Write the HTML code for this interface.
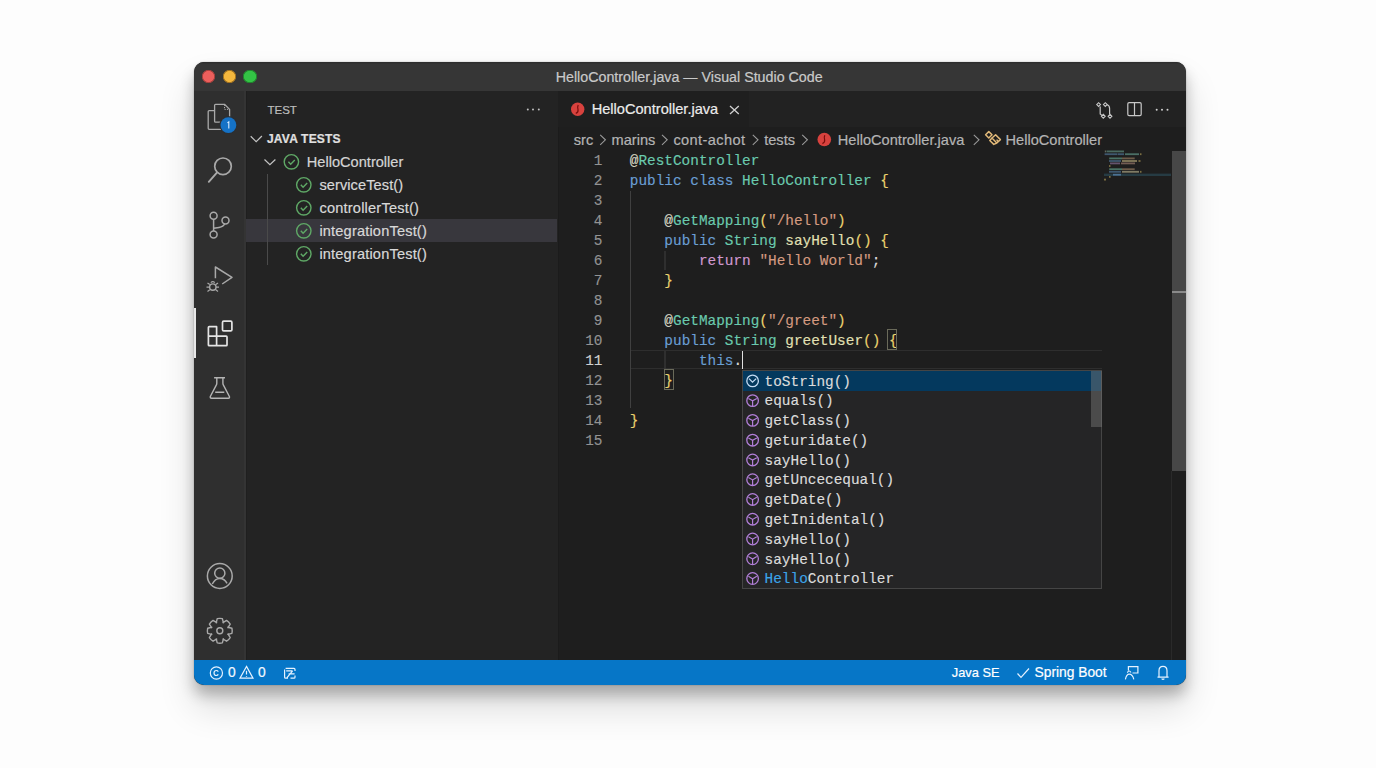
<!DOCTYPE html>
<html><head><meta charset="utf-8">
<style>
html,body{margin:0;padding:0;}
body{width:1376px;height:768px;position:relative;overflow:hidden;background:#fdfdfd;font-family:"Liberation Sans", sans-serif;}
.r{position:absolute;}
.t{position:absolute;white-space:pre;line-height:20px;font-family:"Liberation Sans", sans-serif;-webkit-text-stroke:0.2px currentColor;}
.m{position:absolute;white-space:pre;line-height:20px;font-family:"Liberation Mono", monospace;font-size:14.4px;-webkit-text-stroke:0.15px currentColor;}
.ln{left:560px;width:42.5px;text-align:right;}
#win{position:absolute;border-radius:10px;background:#1e1e1e;box-shadow:0 10px 14px rgba(0,0,0,0.24),0 22px 36px rgba(0,0,0,0.14),0 0 1.5px rgba(0,0,0,0.35);}
svg{position:absolute;left:0;top:0;}
</style></head><body>
<div id="win" style="left:194px;top:62px;width:992px;height:623px;"></div>
<div class="r" style="left:194px;top:62px;width:992px;height:29px;background:linear-gradient(#2c2c2c 0px,#363636 2.5px,#363636 100%);border-radius:10px 10px 0 0"></div>
<div class="r" style="left:201.80px;top:69.70px;width:13.6px;height:13.6px;border-radius:50%;background:#ec5f5c;box-shadow:inset 0 0 0 0.8px #9a3a36;"></div>
<div class="r" style="left:222.70px;top:69.70px;width:13.6px;height:13.6px;border-radius:50%;background:#f4b73d;box-shadow:inset 0 0 0 0.8px #94661a;"></div>
<div class="r" style="left:243.10px;top:69.70px;width:13.6px;height:13.6px;border-radius:50%;background:#33c345;box-shadow:inset 0 0 0 0.8px #1d7a28;"></div>
<div class="t" style="left:555.7px;top:66.66px;font-size:14.27px;color:#c9c9c9;font-weight:400;">HelloController.java — Visual Studio Code</div>
<div class="r" style="left:194px;top:91px;width:52px;height:569px;background:#2f2f2f"></div>
<div class="r" style="left:244px;top:91px;width:2px;height:569px;background:#343434"></div>
<div class="r" style="left:194px;top:308px;width:2px;height:50px;background:#e8e8e8"></div>
<div class="r" style="left:246px;top:91px;width:312px;height:569px;background:#232323"></div>
<div class="r" style="left:246px;top:91px;width:1px;height:569px;background:#1f1f1f"></div>
<div class="r" style="left:558px;top:91px;width:1px;height:569px;background:#1b1b1b"></div>
<div class="r" style="left:246px;top:219px;width:311px;height:23px;background:#38373d"></div>
<div class="t" style="left:267.5px;top:100.22px;font-size:11.5px;color:#bdbdbd;font-weight:400;">TEST</div>
<div class="t" style="left:267px;top:129.14px;font-size:12px;color:#e0e0e0;font-weight:700;letter-spacing:0.2px;">JAVA TESTS</div>
<div class="t" style="left:306.8px;top:151.94px;font-size:14.6px;color:#d4d4d4;font-weight:400;">HelloController</div>
<div class="t" style="left:319.4px;top:174.94px;font-size:14.6px;color:#d8d8d8;font-weight:400;letter-spacing:0.08px;">serviceTest()</div>
<div class="t" style="left:319.4px;top:197.94px;font-size:14.6px;color:#d8d8d8;font-weight:400;letter-spacing:0.2px;">controllerTest()</div>
<div class="t" style="left:319.4px;top:220.94px;font-size:14.6px;color:#d8d8d8;font-weight:400;letter-spacing:0.17px;">integrationTest()</div>
<div class="t" style="left:319.4px;top:243.94px;font-size:14.6px;color:#d8d8d8;font-weight:400;letter-spacing:0.17px;">integrationTest()</div>
<div class="r" style="left:267px;top:174px;width:1px;height:91px;background:#4a4a4a"></div>
<div class="r" style="left:558px;top:91px;width:628px;height:36px;background:#222222"></div>
<div class="r" style="left:558px;top:91px;width:191px;height:36px;background:#1f1f1f"></div>
<div class="t" style="left:591.7px;top:99.24px;font-size:14.6px;color:#ececec;font-weight:400;">HelloController.java</div>
<div class="r" style="left:559px;top:127px;width:627px;height:533px;background:#1e1e1e"></div>
<div class="t" style="left:573.8px;top:129.54px;font-size:14.6px;color:#b4b4b4;font-weight:400;">src</div>
<div class="t" style="left:611.6px;top:129.54px;font-size:14.6px;color:#b4b4b4;font-weight:400;">marins</div>
<div class="t" style="left:673.4px;top:129.54px;font-size:14.6px;color:#b4b4b4;font-weight:400;letter-spacing:0.4px;">cont-achot</div>
<div class="t" style="left:764.2px;top:129.54px;font-size:14.6px;color:#b4b4b4;font-weight:400;">tests</div>
<div class="t" style="left:837.8px;top:129.54px;font-size:14.6px;color:#b4b4b4;font-weight:400;">HelloController.java</div>
<div class="t" style="left:1005.5px;top:129.54px;font-size:14.6px;color:#b4b4b4;font-weight:400;">HelloController</div>
<div class="m ln" style="top:151.16px;color:#939393">1</div>
<div class="m ln" style="top:171.16px;color:#939393">2</div>
<div class="m ln" style="top:191.16px;color:#939393">3</div>
<div class="m ln" style="top:211.16px;color:#939393">4</div>
<div class="m ln" style="top:231.16px;color:#939393">5</div>
<div class="m ln" style="top:251.16px;color:#939393">6</div>
<div class="m ln" style="top:271.16px;color:#939393">7</div>
<div class="m ln" style="top:291.16px;color:#939393">8</div>
<div class="m ln" style="top:311.16px;color:#939393">9</div>
<div class="m ln" style="top:331.16px;color:#939393">10</div>
<div class="m ln" style="top:351.16px;color:#d0d0d0">11</div>
<div class="m ln" style="top:371.16px;color:#939393">12</div>
<div class="m ln" style="top:391.16px;color:#939393">13</div>
<div class="m ln" style="top:411.16px;color:#939393">14</div>
<div class="m ln" style="top:431.16px;color:#939393">15</div>
<div class="r" style="left:631px;top:350px;width:471px;height:19px;border-top:1px solid #2e2e2e;border-bottom:1px solid #2e2e2e;box-sizing:border-box"></div>
<div class="m" style="left:629.8px;top:151.16px;font-size:14.4px;"><span style="color:#d8d8c4">@</span><span style="color:#6acaae">RestController</span></div>
<div class="m" style="left:629.8px;top:171.16px;font-size:14.4px;"><span style="color:#6a9fd4">public</span> <span style="color:#6a9fd4">class</span> <span style="color:#6acaae">HelloController</span> <span style="color:#ebd36e">{</span></div>
<div class="m" style="left:664.3599999999999px;top:211.16px;font-size:14.4px;"><span style="color:#d8d8c4">@</span><span style="color:#6acaae">GetMapping</span><span style="color:#ebd36e">(</span><span style="color:#d49a80">"/hello"</span><span style="color:#ebd36e">)</span></div>
<div class="m" style="left:664.3599999999999px;top:231.16px;font-size:14.4px;"><span style="color:#6a9fd4">public</span> <span style="color:#6acaae">String</span> <span style="color:#e2e0b4">sayHello</span><span style="color:#ebd36e">()</span> <span style="color:#ebd36e">{</span></div>
<div class="m" style="left:698.92px;top:251.16px;font-size:14.4px;"><span style="color:#d098d0">return</span> <span style="color:#d49a80">"Hello World"</span><span style="color:#dcdcdc">;</span></div>
<div class="m" style="left:664.3599999999999px;top:271.16px;font-size:14.4px;"><span style="color:#ebd36e">}</span></div>
<div class="m" style="left:664.3599999999999px;top:311.16px;font-size:14.4px;"><span style="color:#d8d8c4">@</span><span style="color:#6acaae">GetMapping</span><span style="color:#ebd36e">(</span><span style="color:#d49a80">"/greet"</span><span style="color:#ebd36e">)</span></div>
<div class="m" style="left:664.3599999999999px;top:331.16px;font-size:14.4px;"><span style="color:#6a9fd4">public</span> <span style="color:#6acaae">String</span> <span style="color:#e2e0b4">greetUser</span><span style="color:#ebd36e">()</span> <span style="color:#ebd36e">{</span></div>
<div class="m" style="left:698.92px;top:351.16px;font-size:14.4px;"><span style="color:#6a9fd4">this</span><span style="color:#dcdcdc">.</span></div>
<div class="m" style="left:664.3599999999999px;top:371.16px;font-size:14.4px;"><span style="color:#ebd36e">}</span></div>
<div class="m" style="left:629.8px;top:411.16px;font-size:14.4px;"><span style="color:#ebd36e">}</span></div>
<div class="r" style="left:741.5px;top:351px;width:1.5px;height:18px;background:#e0e0e0"></div>
<div class="r" style="left:742px;top:370px;width:360px;height:219px;background:#252526;border:1px solid #454545;box-sizing:border-box"></div>
<div class="r" style="left:743px;top:371px;width:358px;height:20px;background:#04395e"></div>
<div class="r" style="left:1091px;top:371px;width:11px;height:56px;background:rgba(121,121,121,0.45)"></div>
<div class="m" style="left:764.6px;top:371.66px;font-size:14.4px;"><span style="color:#dcdcdc">toString()</span></div>
<div class="m" style="left:764.6px;top:391.42px;font-size:14.4px;"><span style="color:#dcdcdc">equals()</span></div>
<div class="m" style="left:764.6px;top:411.18px;font-size:14.4px;"><span style="color:#dcdcdc">getClass()</span></div>
<div class="m" style="left:764.6px;top:430.94px;font-size:14.4px;"><span style="color:#dcdcdc">geturidate()</span></div>
<div class="m" style="left:764.6px;top:450.70px;font-size:14.4px;"><span style="color:#dcdcdc">sayHello()</span></div>
<div class="m" style="left:764.6px;top:470.46px;font-size:14.4px;"><span style="color:#dcdcdc">getUncecequal()</span></div>
<div class="m" style="left:764.6px;top:490.22px;font-size:14.4px;"><span style="color:#dcdcdc">getDate()</span></div>
<div class="m" style="left:764.6px;top:509.98px;font-size:14.4px;"><span style="color:#dcdcdc">getInidental()</span></div>
<div class="m" style="left:764.6px;top:529.74px;font-size:14.4px;"><span style="color:#dcdcdc">sayHello()</span></div>
<div class="m" style="left:764.6px;top:549.50px;font-size:14.4px;"><span style="color:#dcdcdc">sayHello()</span></div>
<div class="m" style="left:764.6px;top:569.26px;font-size:14.4px;"><span style="color:#3ba4e8">Hello</span><span style="color:#dcdcdc">Controller</span></div>
<div class="r" style="left:1172px;top:151px;width:14px;height:320px;background:#474747"></div>
<div class="r" style="left:1172px;top:291px;width:14px;height:2px;background:#8a8a8a"></div>
<div class="r" style="left:1171px;top:471px;width:1px;height:189px;background:#2a2a2a"></div>
<div class="r" style="left:194px;top:660px;width:992px;height:25px;background:#0676c7;border-radius:0 0 10px 10px"></div>
<div class="t" style="left:228px;top:663.12px;font-size:13.8px;color:#f2f8ff;font-weight:400;">0</div>
<div class="t" style="left:258px;top:663.12px;font-size:13.8px;color:#f2f8ff;font-weight:400;">0</div>
<div class="t" style="left:951.8px;top:663.26px;font-size:12.8px;color:#ffffff;font-weight:400;">Java SE</div>
<div class="t" style="left:1034.5px;top:662.92px;font-size:13.8px;color:#ffffff;font-weight:400;">Spring Boot</div>
<svg width="1376" height="768" viewBox="0 0 1376 768"><g fill="none" stroke="#a9a9a9" stroke-width="1.3" stroke-linejoin="round"><path d="M214.6 110.6 H209.2 Q208.2 110.6 208.2 111.6 V128.3 Q208.2 129.3 209.2 129.3 H221.5"/><path d="M215.6 104.3 H224.5 L229.6 109.4 V118 M215.6 104.3 Q214.6 104.3 214.6 105.3 V121.2 Q214.6 122.2 215.6 122.2 H220.5"/><path d="M224.5 104.6 V109.4 H229.4" stroke-width="1" stroke-dasharray="1.2 1.2"/><circle cx="223" cy="166.3" r="8.3" stroke-width="1.7"/><path d="M216.9 172.6 L208.8 181.8" stroke-width="1.9" stroke-linecap="round"/><g stroke-width="1.5"><circle cx="213.6" cy="215.7" r="3.5"/><circle cx="225.5" cy="220.6" r="3.5"/><circle cx="213.6" cy="234.6" r="3.5"/><path d="M213.6 219.2 V231.1 M224.6 224 Q223.5 226.6 219 227.4 L213.8 228.3"/></g><path d="M215.4 278.2 V267 L232 277.4 L222.2 284" stroke-width="1.5"/><circle cx="212.8" cy="287.1" r="3.2" stroke-width="1.4"/><path d="M207.5 283 L209.8 284.6 M218 283 L215.8 284.6 M206.5 287.1 H209.5 M219 287.1 H216 M207.5 291.4 L209.8 289.8 M218 291.4 L215.8 289.8 M210.8 282.6 Q212.8 280.8 214.8 282.6" stroke-width="1.2"/></g><g fill="none" stroke="#e4e4e4" stroke-width="1.7" stroke-linejoin="round"><path d="M208.4 327.5 Q208.4 326.7 209.2 326.7 H216.6 V336.1 H226.2 Q227 336.1 227 336.9 V344.9 Q227 345.7 226.2 345.7 H209.2 Q208.4 345.7 208.4 344.9 Z M208.4 336.1 H216.6 V345.7"/><rect x="222.5" y="321.2" width="9.4" height="9.7" rx="1.2"/></g><g fill="none" stroke="#b4b4b4" stroke-width="1.4" stroke-linejoin="round"><path d="M214.1 377.7 H225 M216.8 377.9 V383.2 Q216.8 384.4 216 385.6 L210.3 396.5 Q209.9 398.2 211.5 398.2 H228.3 Q229.9 398.2 229.4 396.5 L223.7 385.6 Q222.9 384.4 222.9 383.2 V377.9 M215.2 392.2 H224.3"/></g><g fill="none" stroke="#a9a9a9" stroke-width="1.5"><circle cx="219.8" cy="576" r="12.4"/><circle cx="219.8" cy="573.2" r="5.1"/><path d="M212.3 584 Q215 578.4 219.8 578.4 Q224.6 578.4 227 583.4"/></g><path d="M216.21 622.76 L217.22 618.67 A 12.4 12.4 0 0 1 222.38 618.67 L223.39 622.76 A 8.8 8.8 0 0 1 222.94 622.58 L226.55 620.40 A 12.4 12.4 0 0 1 230.20 624.05 L228.02 627.66 A 8.8 8.8 0 0 1 227.84 627.21 L231.93 628.22 A 12.4 12.4 0 0 1 231.93 633.38 L227.84 634.39 A 8.8 8.8 0 0 1 228.02 633.94 L230.20 637.55 A 12.4 12.4 0 0 1 226.55 641.20 L222.94 639.02 A 8.8 8.8 0 0 1 223.39 638.84 L222.38 642.93 A 12.4 12.4 0 0 1 217.22 642.93 L216.21 638.84 A 8.8 8.8 0 0 1 216.66 639.02 L213.05 641.20 A 12.4 12.4 0 0 1 209.40 637.55 L211.58 633.94 A 8.8 8.8 0 0 1 211.76 634.39 L207.67 633.38 A 12.4 12.4 0 0 1 207.67 628.22 L211.76 627.21 A 8.8 8.8 0 0 1 211.58 627.66 L209.40 624.05 A 12.4 12.4 0 0 1 213.05 620.40 L216.66 622.58 A 8.8 8.8 0 0 1 216.21 622.76 Z" fill="none" stroke="#a9a9a9" stroke-width="1.4" stroke-linejoin="round"/><circle cx="219.8" cy="630.8" r="3" fill="none" stroke="#a9a9a9" stroke-width="1.4"/><circle cx="228.4" cy="125.1" r="9" fill="#2c2f33"/><circle cx="228.4" cy="125.1" r="7.9" fill="#1572c6"/><path d="M227.4 122.9 L228.8 121.9 V128.4" fill="none" stroke="#d6ebff" stroke-width="1.1"/><circle cx="527.8" cy="109.6" r="1" fill="#c0c0c0"/><circle cx="533" cy="109.6" r="1" fill="#c0c0c0"/><circle cx="538.8" cy="109.6" r="1" fill="#c0c0c0"/><path d="M250.7 136.3 L256.2 141.7 L261.9 136" fill="none" stroke="#c4c4c4" stroke-width="1.2"/><path d="M264.5 159.5 L269.9 164.7 L275.4 159.5" fill="none" stroke="#c4c4c4" stroke-width="1.2"/><circle cx="291.4" cy="161.8" r="7.2" fill="none" stroke="#5fa866" stroke-width="1.4"/><path d="M288.4 161.8 L290.7 164.3 L294.79999999999995 160.0" fill="none" stroke="#5fa866" stroke-width="1.4"/><circle cx="303.8" cy="184.8" r="7.2" fill="none" stroke="#5fa866" stroke-width="1.4"/><path d="M300.8 184.8 L303.1 187.3 L307.2 183.0" fill="none" stroke="#5fa866" stroke-width="1.4"/><circle cx="303.8" cy="207.8" r="7.2" fill="none" stroke="#5fa866" stroke-width="1.4"/><path d="M300.8 207.8 L303.1 210.3 L307.2 206.0" fill="none" stroke="#5fa866" stroke-width="1.4"/><circle cx="303.8" cy="230.8" r="7.2" fill="none" stroke="#5fa866" stroke-width="1.4"/><path d="M300.8 230.8 L303.1 233.3 L307.2 229.0" fill="none" stroke="#5fa866" stroke-width="1.4"/><circle cx="303.8" cy="253.8" r="7.2" fill="none" stroke="#5fa866" stroke-width="1.4"/><path d="M300.8 253.8 L303.1 256.3 L307.2 252.0" fill="none" stroke="#5fa866" stroke-width="1.4"/><circle cx="577.7" cy="109.3" r="6.7" fill="#d8423e"/><path d="M578.2 105 Q577.2 107 578 109.5 Q578.6 112.4 575.8 113.4" fill="none" stroke="#7a0c0c" stroke-width="1.2"/><path d="M730 106 L738.8 114 M738.8 106 L730 114" stroke="#d0d0d0" stroke-width="1.3"/><g fill="none" stroke="#c8c8c8" stroke-width="1.2"><path d="M1100.2 106.4 V114 L1102.2 115.6 M1107 104.8 Q1109.6 105.6 1109.6 108.5 V114.2"/><path d="M1096.70 104.60 L1098.60 102.70 L1100.50 104.60 L1098.60 106.50 Z M1103.40 104.60 L1105.30 102.70 L1107.20 104.60 L1105.30 106.50 Z M1101.40 116.30 L1103.30 114.40 L1105.20 116.30 L1103.30 118.20 Z M1108.10 116.30 L1110.00 114.40 L1111.90 116.30 L1110.00 118.20 Z " stroke-width="1.1"/><rect x="1127.8" y="102.6" width="13.4" height="13" rx="1.3"/><path d="M1134.5 102.6 V115.6"/></g><circle cx="1156.7" cy="109.8" r="1" fill="#d0d0d0"/><circle cx="1162" cy="109.8" r="1" fill="#d0d0d0"/><circle cx="1167.5" cy="109.8" r="1" fill="#d0d0d0"/><path d="M600.2 134.8 L605.4000000000001 139.8 L600.2 144.8" fill="none" stroke="#9a9a9a" stroke-width="1.1"/><path d="M662 134.8 L667.2 139.8 L662 144.8" fill="none" stroke="#9a9a9a" stroke-width="1.1"/><path d="M752.8 134.8 L758.0 139.8 L752.8 144.8" fill="none" stroke="#9a9a9a" stroke-width="1.1"/><path d="M802.2 134.8 L807.4000000000001 139.8 L802.2 144.8" fill="none" stroke="#9a9a9a" stroke-width="1.1"/><path d="M973.8 134.8 L979.0 139.8 L973.8 144.8" fill="none" stroke="#9a9a9a" stroke-width="1.1"/><circle cx="824.3" cy="139.5" r="6.8" fill="#d8423e"/><path d="M824.8 135.2 Q823.8 137.2 824.6 139.7 Q825.2 142.6 822.4 143.6" fill="none" stroke="#7a0c0c" stroke-width="1.2"/><g fill="none" stroke="#e0b878" stroke-width="1.5" stroke-linejoin="round"><path d="M988.8 131.6 L992 134.8 L988.8 138 L985.6 134.8 Z"/><path d="M992 138 L995.6 134.8 L1000.4 139.6 L996.8 143 Z"/><path d="M992 138 L989.8 140.5 L993.8 144.4 L996.8 143"/><path d="M996.6 139.6 L998.4 141.8"/></g><circle cx="752.6" cy="380.9" r="5.8" fill="none" stroke="#c4dcf4" stroke-width="1.3"/><path d="M749 378.6 L752.5 382.2 L756.2 378.6" fill="none" stroke="#c4dcf4" stroke-width="1.3"/><circle cx="752.6" cy="400.66" r="5.8" fill="none" stroke="#b27fd8" stroke-width="1.3"/><path d="M748.4 398.46 L752.6 400.86 L756.8 398.46 M752.6 400.86 V406.16" fill="none" stroke="#b27fd8" stroke-width="1.2"/><circle cx="752.6" cy="420.42" r="5.8" fill="none" stroke="#b27fd8" stroke-width="1.3"/><path d="M748.4 418.22 L752.6 420.62 L756.8 418.22 M752.6 420.62 V425.92" fill="none" stroke="#b27fd8" stroke-width="1.2"/><circle cx="752.6" cy="440.18" r="5.8" fill="none" stroke="#b27fd8" stroke-width="1.3"/><path d="M748.4 437.98 L752.6 440.38 L756.8 437.98 M752.6 440.38 V445.68" fill="none" stroke="#b27fd8" stroke-width="1.2"/><circle cx="752.6" cy="459.94" r="5.8" fill="none" stroke="#b27fd8" stroke-width="1.3"/><path d="M748.4 457.74 L752.6 460.14 L756.8 457.74 M752.6 460.14 V465.44" fill="none" stroke="#b27fd8" stroke-width="1.2"/><circle cx="752.6" cy="479.70" r="5.8" fill="none" stroke="#b27fd8" stroke-width="1.3"/><path d="M748.4 477.50 L752.6 479.90 L756.8 477.50 M752.6 479.90 V485.20" fill="none" stroke="#b27fd8" stroke-width="1.2"/><circle cx="752.6" cy="499.46" r="5.8" fill="none" stroke="#b27fd8" stroke-width="1.3"/><path d="M748.4 497.26 L752.6 499.66 L756.8 497.26 M752.6 499.66 V504.96" fill="none" stroke="#b27fd8" stroke-width="1.2"/><circle cx="752.6" cy="519.22" r="5.8" fill="none" stroke="#b27fd8" stroke-width="1.3"/><path d="M748.4 517.02 L752.6 519.42 L756.8 517.02 M752.6 519.42 V524.72" fill="none" stroke="#b27fd8" stroke-width="1.2"/><circle cx="752.6" cy="538.98" r="5.8" fill="none" stroke="#b27fd8" stroke-width="1.3"/><path d="M748.4 536.78 L752.6 539.18 L756.8 536.78 M752.6 539.18 V544.48" fill="none" stroke="#b27fd8" stroke-width="1.2"/><circle cx="752.6" cy="558.74" r="5.8" fill="none" stroke="#b27fd8" stroke-width="1.3"/><path d="M748.4 556.54 L752.6 558.94 L756.8 556.54 M752.6 558.94 V564.24" fill="none" stroke="#b27fd8" stroke-width="1.2"/><circle cx="752.6" cy="578.50" r="5.8" fill="none" stroke="#b27fd8" stroke-width="1.3"/><path d="M748.4 576.30 L752.6 578.70 L756.8 576.30 M752.6 578.70 V584.00" fill="none" stroke="#b27fd8" stroke-width="1.2"/><rect x="664.5" y="369.5" width="9" height="20" fill="none" stroke="#6a6a5a" stroke-width="1"/><rect x="887.5" y="329.5" width="9" height="20" fill="none" stroke="#6a6a5a" stroke-width="1"/><path d="M630.5 191 V408 M665 251 V270 M665 351 V369" stroke="#404040" stroke-width="1"/><g fill="none" stroke="#e6f2ff" stroke-width="1.2"><circle cx="216.4" cy="673" r="6.1"/><path d="M218.3 671.6 Q217.6 670.5 216.4 670.5 Q214 670.5 214 673 Q214 675.5 216.4 675.5 Q217.6 675.5 218.3 674.4"/><path d="M246.5 666.4 L253 678.2 H240 Z M246.5 670.8 V674.5 M246.5 676 V676.8"/><path d="M285.6 668.4 H294 Q295 668.4 295 669.4 V671 M284.6 669.4 V677.2 Q284.6 678.2 285.6 678.2 H288 M290.5 678.2 H294 Q295 678.2 295 677.2 V675.5 M286.2 670.8 H292.6 M292.6 670.8 L287 677.6 M288.6 673.8 H294.6"/><path d="M1017.5 673.5 L1021 677.3 L1029 668.5"/><path d="M1128.4 670.5 V666.6 H1137.9 V673 H1132.5 M1125.4 679.3 Q1126.5 674.2 1129.2 674.2 Q1132.6 674.2 1133.8 679.3 M1127.3 672.6 Q1129.2 669.5 1131 672.5"/><path d="M1159 676.8 V670.8 Q1159 666.3 1163 666.3 Q1167 666.3 1167 670.8 V676.8 M1157.5 677.2 H1168.6 M1161.6 678.6 Q1163 680 1164.4 678.6"/></g><rect x="1104" y="173.6" width="67" height="2.4" fill="#2c4f5c" opacity="0.6"/><rect x="1104.8" y="150.5" width="1.2" height="1.8" fill="#9aa890" opacity="0.55"/><rect x="1106.5" y="150.5" width="17.5" height="1.8" fill="#6fa898" opacity="0.55"/><rect x="1104.6" y="153.3" width="12.4" height="1.8" fill="#5a86b0" opacity="0.55"/><rect x="1117.5" y="153.3" width="6.5" height="1.8" fill="#5a86b0" opacity="0.55"/><rect x="1125" y="153.3" width="14.0" height="1.8" fill="#6fb0a0" opacity="0.55"/><rect x="1140" y="153.3" width="1.5" height="1.8" fill="#c8b060" opacity="0.55"/><rect x="1109.2" y="157.5" width="12.8" height="1.8" fill="#70b8a0" opacity="0.55"/><rect x="1122" y="157.5" width="12.7" height="1.8" fill="#b09070" opacity="0.55"/><rect x="1109" y="160.1" width="12.0" height="1.8" fill="#5a86b0" opacity="0.55"/><rect x="1122" y="160.1" width="15.0" height="1.8" fill="#d8c890" opacity="0.55"/><rect x="1138.5" y="160.1" width="2.0" height="1.8" fill="#c8b060" opacity="0.55"/><rect x="1110" y="162.5" width="10.0" height="1.8" fill="#a080b0" opacity="0.55"/><rect x="1121" y="162.5" width="14.0" height="1.8" fill="#b89080" opacity="0.55"/><rect x="1109" y="165.1" width="1.5" height="1.8" fill="#c8b060" opacity="0.55"/><rect x="1109.2" y="168.3" width="12.8" height="1.8" fill="#70b8a0" opacity="0.55"/><rect x="1122" y="168.3" width="12.7" height="1.8" fill="#b09070" opacity="0.55"/><rect x="1109" y="170.9" width="12.0" height="1.8" fill="#5a86b0" opacity="0.55"/><rect x="1122" y="170.9" width="17.0" height="1.8" fill="#d0c8a0" opacity="0.55"/><rect x="1140" y="170.9" width="1.5" height="1.8" fill="#c8b060" opacity="0.55"/><rect x="1113" y="173.8" width="8.0" height="1.8" fill="#6a9fd4" opacity="0.55"/><rect x="1109" y="176.0" width="1.6" height="1.8" fill="#c8b060" opacity="0.55"/><rect x="1104" y="178.7" width="2.0" height="1.8" fill="#c8b060" opacity="0.55"/></svg>

</body></html>
